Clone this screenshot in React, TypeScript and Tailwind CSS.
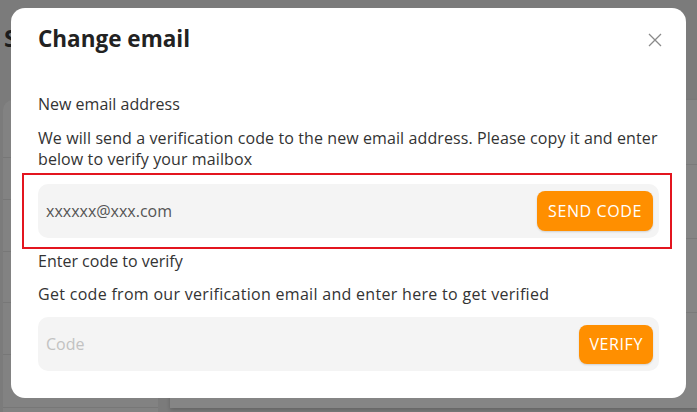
import React from 'react';

function CloseIcon() {
  return (
    <svg width="14" height="14" viewBox="0 0 14 14" fill="none" stroke="#8a8a8a" strokeWidth="1.3">
      <path d="M1 1L13 13M13 1L1 13" />
    </svg>
  );
}

function Backdrop() {
  return (
    <div className="absolute inset-0 bg-[#7b7b7b]">
      <div className="pl-[4px] pt-[22px] text-[24px] font-bold text-[#1c1c1c] leading-[32px]">S</div>
      <div className="flex mt-[46px] h-[320px]">
        <div className="w-[155px] ml-[3px] rounded-tl-[10px] bg-[#828282] flex flex-col">
          <div className="h-[58px] border-b border-[#777]" />
          <div className="h-[42px] border-b border-[#777]" />
          <div className="h-[52px] border-b border-[#777]" />
          <div className="h-[51px] border-b border-[#777]" />
          <div className="h-[52px] border-b border-[#777]" />
          <div className="h-[53px] border-b border-[#777]" />
        </div>
        <div className="flex-1 flex flex-col">
          <div className="flex-1 ml-[12px] bg-[#858585] flex flex-col shadow-[0_2px_4px_rgba(0,0,0,0.2)]">
            <div className="h-[65px] border-b border-[#7a7a7a]" />
            <div className="h-[74px] border-b border-[#7a7a7a]" />
            <div className="h-[74px] border-b border-[#7a7a7a]" />
          </div>
          <div className="h-[12px]" />
        </div>
      </div>
    </div>
  );
}

export default function App() {
  return (
    <div
      className="relative w-[697px] h-[412px] overflow-hidden"
      style={{ fontFamily: '"Open Sans", "Noto Sans", sans-serif' }}
    >
      <Backdrop />

      <div className="absolute left-[11px] top-[8px] w-[675px] h-[390px] bg-white rounded-[14px] px-[27px] pt-[15px] flex flex-col text-[#333]">
        <div className="flex items-center justify-between">
          <h2 className="text-[22.5px] font-bold leading-[32px] text-[#222]">Change email</h2>
          <button className="mr-[-4px] mt-[2px] p-[1px]">
            <CloseIcon />
          </button>
        </div>

        <div className="mt-[38px] text-[16px] leading-[22px]">New email address</div>
        <p className="mt-[13px] text-[16px] leading-[21px] tracking-[0.1px]">
          We will send a verification code to the new email address. Please copy it and enter below to verify your mailbox
        </p>

        <div className="mt-[3px] ml-[-16px] mr-[-13px] border-2 border-[#e3151f] pl-[14px] pr-[11px] py-[9px]">
          <div className="h-[54px] bg-[#f4f4f4] rounded-[10px] flex items-center justify-between pl-[8px] pr-[6px]">
            <span className="text-[16px] text-[#555]">xxxxxx@xxx.com</span>
            <button className="h-[40px] px-[11px] rounded-[8px] bg-[#ff8f00] text-white text-[16px] tracking-[0.6px] shadow-[0_1px_2px_rgba(0,0,0,0.15)]">
              SEND CODE
            </button>
          </div>
        </div>

        <div className="mt-[1px] text-[16px] leading-[22px]">Enter code to verify</div>
        <div className="mt-[11px] text-[16px] leading-[22px] tracking-[0.3px]">
          Get code from our verification email and enter here to get verified
        </div>

        <div className="mt-[12px] h-[54px] bg-[#f4f4f4] rounded-[10px] flex items-center justify-between pl-[8px] pr-[6px]">
          <span className="text-[16px] text-[#c2c2c2]">Code</span>
          <button className="h-[39px] px-[10px] rounded-[8px] bg-[#ff8f00] text-white text-[16px] tracking-[0.6px] shadow-[0_1px_2px_rgba(0,0,0,0.15)]">
            VERIFY
          </button>
        </div>
      </div>
    </div>
  );
}
